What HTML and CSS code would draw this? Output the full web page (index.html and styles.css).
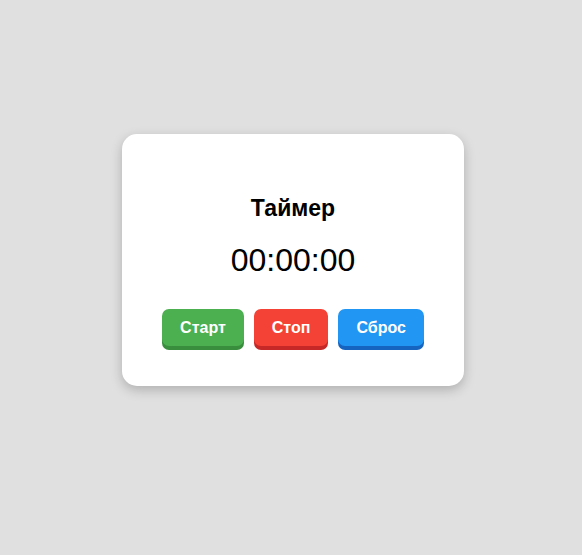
FILE: index.html
```html
<!DOCTYPE html>
<html lang="ru">
<head>
<meta charset="utf-8">
<title>Таймер</title>
<link rel="stylesheet" href="styles.css">
</head>
<body>
<div class="card">
  <h2 class="title">Таймер</h2>
  <div class="time">00:00:00</div>
  <div class="buttons">
    <button class="btn btn-start">Старт</button>
    <button class="btn btn-stop">Стоп</button>
    <button class="btn btn-reset">Сброс</button>
  </div>
</div>
</body>
</html>
```
FILE: styles.css
```css
html, body {
  margin: 0;
  height: 100%;
}
body {
  background: #e0e0e0;
  font-family: "Liberation Sans", Arial, sans-serif;
  display: flex;
  justify-content: center;
  align-items: flex-start;
  padding: 134px 0 0 4px;
  box-sizing: border-box;
}
.card {
  width: 342px;
  height: 252px;
  box-sizing: border-box;
  background: #fff;
  border-radius: 15px;
  box-shadow: 0 4px 12px rgba(0, 0, 0, 0.22);
  display: flex;
  flex-direction: column;
  align-items: center;
  padding-top: 60px;
}
.title {
  margin: 0;
  font-size: 23px;
  font-weight: bold;
  color: #000;
  line-height: 28px;
}
.time {
  margin-top: 20px;
  font-size: 32px;
  line-height: 37px;
  color: #000;
}
.buttons {
  display: flex;
  gap: 10px;
  margin-top: 30px;
}
.btn {
  font-family: "Liberation Sans", Arial, sans-serif;
  font-size: 16px;
  font-weight: bold;
  color: #fff;
  border: none;
  border-radius: 7px;
  padding: 0 18px;
  height: 37px;
  cursor: pointer;
}
.btn-start {
  background: #4caf50;
  box-shadow: 0 4px 0 #388e3c;
}
.btn-stop {
  background: #f44336;
  box-shadow: 0 4px 0 #c62828;
}
.btn-reset {
  background: #2196f3;
  box-shadow: 0 4px 0 #1565c0;
}
```
